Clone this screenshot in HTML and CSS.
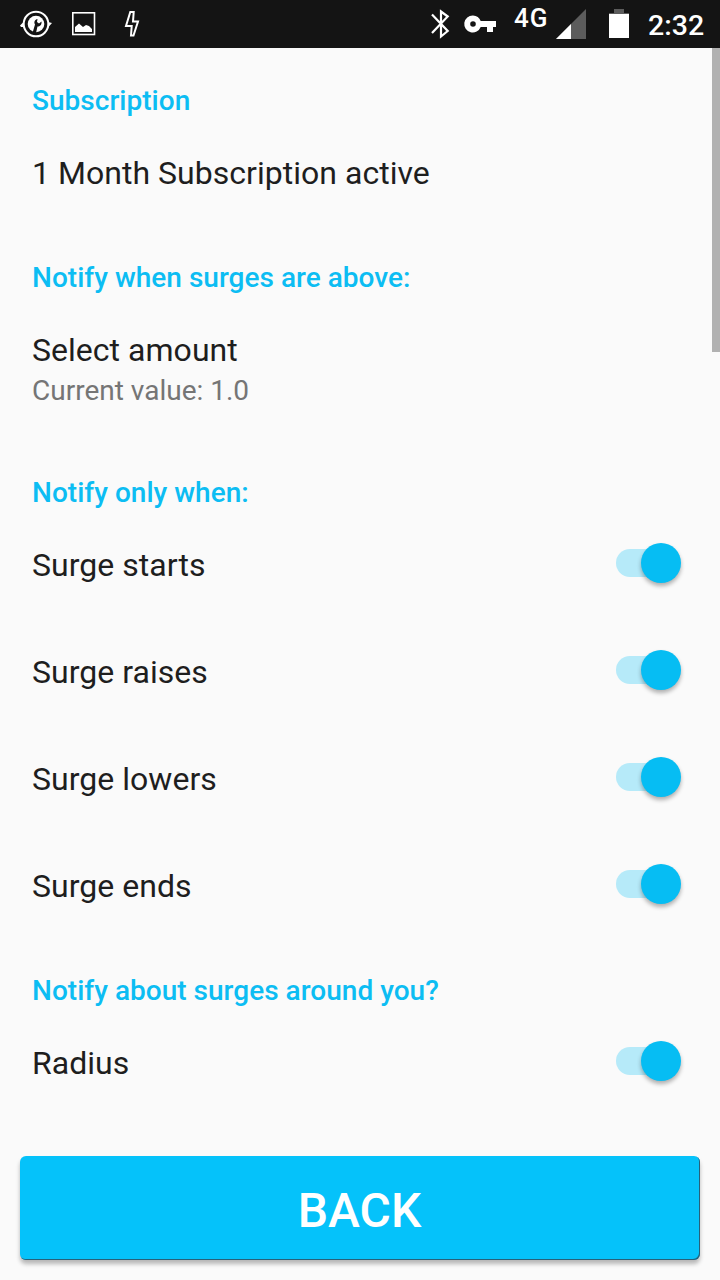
FILE: index.html
```
<!DOCTYPE html>
<html lang="en">
<head>
	<meta charset="utf-8">
	<meta name="viewport" content="width=device-width, initial-scale=1">
	<title>Settings</title>
	<link rel="stylesheet" href="styles.css">
</head>
<body>
	<header class="status">
		<svg class="status-icons" width="160" height="48" viewBox="0 0 160 48">
			<circle cx="36" cy="24" r="12.3" fill="none" stroke="#fff" stroke-width="2"/>
			<path d="M20 25.500l4-4v5.500h-3zM52 23l-4-1v5.500z" fill="#fff"/>
			<circle cx="36" cy="24" r="8.3" fill="#fff"/>
			<path d="M32.500 33l2.500-8.500c-1.500-2.500 0-5 2.500-5.500l-.5 3 2 1.500 2.500-2c.5 3-1.500 5-4 5L36 33z" fill="#141414"/>
			<rect x="72.8" y="12.8" width="21.700" height="21.700" fill="none" stroke="#fff" stroke-width="1.6"/>
			<path d="M75 32v-5l4-3.5 4 3.5 3-2 3 1 3 3v3z" fill="#fff"/>
			<path d="M130.300 12h3.400l-.7 9.500h5l-4.500 14H131l.7-9.500h-5.700z" fill="none" stroke="#fff" stroke-width="2"/>
		</svg>
		<div class="status-right">
			<svg class="status-icons" width="80" height="48" viewBox="0 0 80 48">
				<path d="M12 14.500l15.700 16.500-6.700 5.500v-25l6.700 5L12 33" fill="none" stroke="#fff" stroke-width="2.200"/>
				<path d="M53 15.500a8.500 8.500 0 1 0 7.700 11.500H67v5h6v-5h3v-6H60.700A8.500 8.500 0 0 0 53 15.500zm0 5.700a2.800 2.800 0 1 1 0 5.600 2.800 2.800 0 0 1 0-5.600z" fill="#fff"/>
			</svg>
			<span class="network">4G</span>
			<svg class="status-icons" width="90" height="48" viewBox="0 0 90 48">
				<path d="M36 9v30H6z" fill="#5c5c5c"/>
				<path d="M21 24v15H6z" fill="#fff"/>
				<path d="M64 9h10v4h5v1H59v-1h5z" fill="#5c5c5c"/>
				<path d="M59 14h20v24H59z" fill="#fff"/>
			</svg>
			<span class="clock">2:32</span>
		</div>
	</header>
	<div class="scrollbar"></div>
	<main class="settings">
		<h2 class="category">Subscription</h2>
		<div class="item"><span class="title">1 Month Subscription active</span></div>

		<h2 class="category">Notify when surges are above:</h2>
		<div class="item item-double">
			<div class="title">Select amount</div>
			<div class="summary">Current value: 1.0</div>
		</div>

		<h2 class="category">Notify only when:</h2>
		<div class="item"><span class="title">Surge starts</span><span class="switch"><span class="thumb"></span></span></div>
		<div class="item"><span class="title">Surge raises</span><span class="switch"><span class="thumb"></span></span></div>
		<div class="item"><span class="title">Surge lowers</span><span class="switch"><span class="thumb"></span></span></div>
		<div class="item"><span class="title">Surge ends</span><span class="switch"><span class="thumb"></span></span></div>

		<h2 class="category">Notify about surges around you?</h2>
		<div class="item"><span class="title">Radius</span><span class="switch"><span class="thumb"></span></span></div>
	</main>
	<footer class="footer">
		<button class="back">BACK</button>
	</footer>
</body>
</html>
```
FILE: styles.css
```
body{
	margin: 0;
	height: 1280px;
	display: flex;
	flex-direction: column;
	overflow: hidden;
	background: #fafafa;
	color: #1e1e1e;
	font-family: Roboto, sans-serif;
}
.status{
	display: flex;
	justify-content: space-between;
	height: 48px;
	background: #141414;
	color: #fff;
}
.status-right{
	display: flex;
	width: 300px;
}
.status-icons{
	display: block;
	flex: none;
}
.network{
	width: 50px;
	box-sizing: border-box;
	padding-left: 14px;
	font-size: 26px;
	font-weight: 500;
	line-height: 36px;
	letter-spacing: 1px;
	white-space: nowrap;
}
.clock{
	padding-left: 8px;
	font-size: 28.5px;
	font-weight: 500;
	line-height: 51px;
}
.scrollbar{
	position: absolute;
	top: 48px;
	right: 0;
	width: 8px;
	height: 304px;
	background: #b1b1b1;
}
.settings{
	height: 1067px;
}
.category{
	box-sizing: border-box;
	height: 70px;
	margin: 0;
	padding: 36px 32px 0;
	color: #0cbdf3;
	font-size: 28px;
	font-weight: 500;
	line-height: 33px;
	letter-spacing: .02px;
}
.item{
	display: flex;
	align-items: center;
	justify-content: space-between;
	box-sizing: border-box;
	height: 107px;
	padding: 0 40px 0 32px;
}
.item-double{
	display: block;
	height: 145px;
	padding-top: 33.5px;
}
.title{
	padding-top: 2px;
	font-size: 32px;
	line-height: 38px;
	letter-spacing: .03px;
}
.item-double .title{
	padding-top: 2px;
}
.summary{
	padding-top: 5px;
	color: #757575;
	font-size: 28px;
	line-height: 33px;
}
.switch{
	display: flex;
	align-items: center;
	justify-content: flex-end;
	width: 64px;
	height: 28px;
	margin-top: -1px;
	border-radius: 14px;
	background: #b6eaf9;
}
.thumb{
	width: 40px;
	height: 40px;
	margin-right: -1px;
	border-radius: 50%;
	background: #06bdf3;
	box-shadow: 0 3px 4px rgba(0, 0, 0, .3);
}
.footer{
	padding: 41px 20px 0;
}
.back{
	display: block;
	width: 680px;
	height: 104px;
	padding: 4px 1px 0 0;
	border: 0;
	border-radius: 6px;
	background: #05c2fa;
	box-shadow: inset -1px -1px 0 #27617a, 0 4px 4px rgba(0, 0, 0, .27);
	color: #fff;
	font-family: inherit;
	font-size: 48px;
	font-weight: 500;
}
```
